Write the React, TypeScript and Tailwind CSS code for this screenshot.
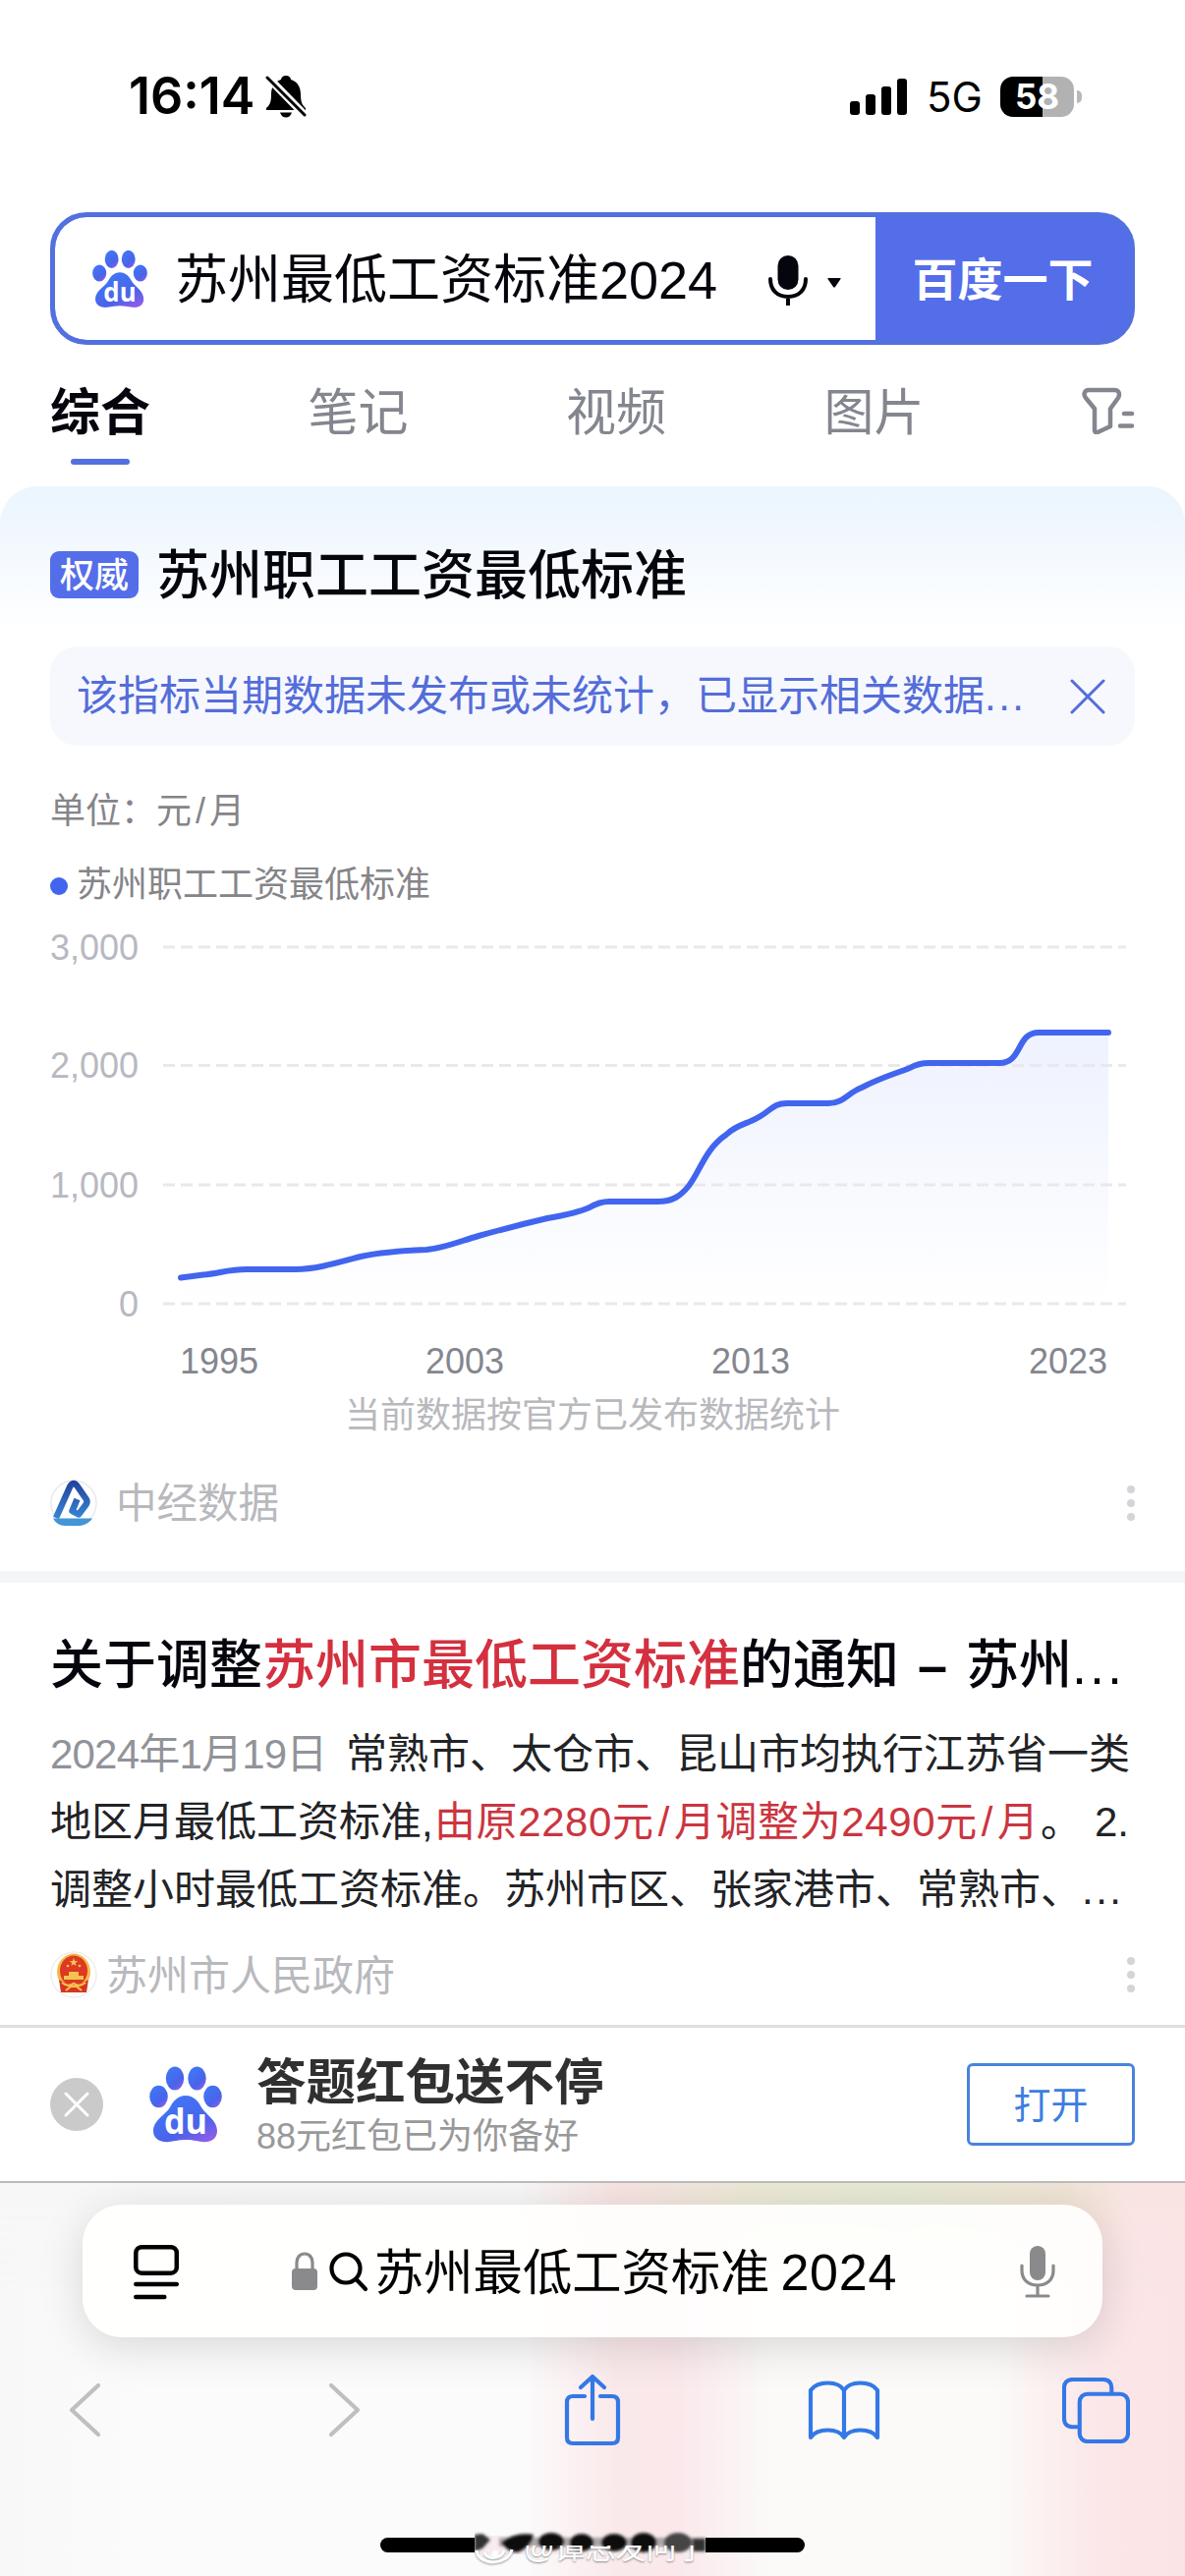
import { useId } from 'react'

const tabs = ['综合', '笔记', '视频', '图片']

const yAxis = [
  { label: '3,000', y: 14 },
  { label: '2,000', y: 134.5 },
  { label: '1,000', y: 256 },
  { label: '0', y: 377 },
]

const LINE =
  'M133 350.5 L156 347.5 C172 346 182 342 200 342 L250 342 C270 342 290 336 316 329 C338 324 359 323 383 322 C403 320 418 313 436 308 Q472 298 506 290 C524 287 540 283 549 279 Q559 273 569 273 L618 273 C634 273 642 267 650 257 C661 243 667 219 688 205 C699 194 711 194 723 186 C735 179 736 173 750 173 L792 173 C808 173 812 162 826 157 C847 146 860 143 875 137 Q884 132 894 132 L966 132 C990 132 983 101 1006 101 L1077 101'

function Paw({ className }: { className: string }) {
  const id = useId()
  return (
    <svg viewBox="0 0 74 78" className={className}>
      <defs>
        <linearGradient id={id} x1="0.2" y1="0" x2="0.9" y2="1">
          <stop offset="0" stopColor="#3f79f6" />
          <stop offset="0.65" stopColor="#4a63ea" />
          <stop offset="1" stopColor="#965ce8" />
        </linearGradient>
      </defs>
      <g fill={`url(#${id})`}>
        <ellipse cx="9.5" cy="31" rx="9.3" ry="11.3" />
        <ellipse cx="26" cy="12.500" rx="9.2" ry="12" />
        <ellipse cx="48.500" cy="12.500" rx="9.2" ry="12" />
        <ellipse cx="64.500" cy="31" rx="9.3" ry="11.3" />
        <path d="M37 30c8 0 13 6 16 12 5 8 16 13 16 24 0 9-8 12-15 11-7-1-11-2-17-2s-10 1-17 2C13 78 4 75 4 66c0-11 12-16 17-24 3-6 8-12 16-12z" />
      </g>
      <text
        x="37"
        y="69"
        textAnchor="middle"
        fontSize="36"
        fontWeight="700"
        fill="#fff"
        textLength="44"
        lengthAdjust="spacingAndGlyphs"
        className="font-['Open_Sans',sans-serif]"
      >
        du
      </text>
    </svg>
  )
}

function StatusBar() {
  return (
    <div className="flex h-[216px] items-start justify-between pl-[131px] pr-[105px] pt-[70px] font-['Inter',sans-serif]">
      <div className="flex h-14 items-center gap-[11px]">
        <span className="w-[128px] whitespace-nowrap text-[52px] font-semibold leading-none">16:14</span>
        <svg viewBox="0 0 42 44" className="h-[44px] w-[42px]">
          <path d="M21 1c3 0 5 2 5 4 7 2 10 8 10 15 0 9 2 11 5 14v2H1v-2c4-3 5-7 5-14C6 13 9 7 16 5c0-2 2-4 5-4z" />
          <path d="M15 38.500h12c-1 3-3 5-6 5s-5-2-6-5z" />
          <path d="M1 1l40 41" stroke="#fff" strokeWidth="8" />
          <path d="M2 3l38 38" stroke="#000" strokeWidth="3" strokeLinecap="round" />
        </svg>
      </div>
      <div className="flex h-14 items-center">
        <div className="flex items-end gap-[6px]">
          <i className="h-[14px] w-[10px] rounded-[3px] bg-black" />
          <i className="h-[21px] w-[10px] rounded-[3px] bg-black" />
          <i className="h-[29px] w-[10px] rounded-[3px] bg-black" />
          <i className="h-[37px] w-[10px] rounded-[3px] bg-black" />
        </div>
        <span className="ml-[20px] w-[73px] whitespace-nowrap pt-[2px] text-[42px] leading-none">5G</span>
        <div className="ml-[2px] flex h-[41px] w-[75px] items-center justify-center rounded-[13px] bg-[linear-gradient(90deg,#000_57%,#b2b2b2_57%)] text-[35px] font-bold leading-none text-white">
          58
        </div>
        <i className="ml-[3px] h-[13px] w-[5px] rounded-r-full bg-[#b8b8b8]" />
      </div>
    </div>
  )
}

function SearchBox() {
  return (
    <div className="mx-[51px] flex h-[135px] overflow-hidden rounded-[37px] border-[5px] border-[#5370e0] bg-[#546de9]">
      <div className="flex flex-1 items-center rounded-l-[32px] bg-white pl-[38px]">
        <Paw className="h-[60px] w-[56px]" />
        <span className="ml-[28px] w-[553px] whitespace-nowrap pt-[2px] text-[54px] leading-[60px] text-[#05060d]">苏州最低工资标准2024</span>
        <svg viewBox="0 0 40 52" className="ml-[51px] mt-[2px] h-[52px] w-[40px]" fill="none" stroke="#05060d" strokeWidth="4">
          <rect x="9.500" y="1" width="21" height="35" rx="10.500" fill="#05060d" stroke="none" />
          <path d="M2 25c0 11 7 18 18 18s18-7 18-18M20 43v8" strokeLinecap="round" />
        </svg>
        <svg viewBox="0 0 14 10" className="ml-5 mt-2 h-[10px] w-[14px]">
          <path d="M1 0h12q1 0 .5 1L8 9q-1 1-2 0L.5 1Q0 0 1 0z" fill="#05060d" />
        </svg>
      </div>
      <div className="flex w-[259px] items-center justify-center pt-[4px] text-[46px] font-bold text-white">百度一下</div>
    </div>
  )
}

function Tabs() {
  return (
    <div className="flex h-[144px] items-start justify-between px-[51px] pt-[39px]">
      {tabs.map((t, i) => (
        <div key={t} className="flex w-[102px] flex-col items-center">
          <span className={i === 0 ? 'text-[51px] font-bold leading-[62px] text-[#05060d]' : 'text-[51px] leading-[62px] text-[#84868f]'}>{t}</span>
          {i === 0 && <i className="mt-[15px] h-[6px] w-[60px] rounded-full bg-[#5370e0]" />}
        </div>
      ))}
      <svg viewBox="0 0 54 48" className="mt-[4px] h-[48px] w-[54px]" fill="none" stroke="#84868f" strokeWidth="4.500" strokeLinecap="round" strokeLinejoin="round">
        <path d="M7 3h26c5 0 6 4 4 8l-8 11v18l-13 6q-3 1-3-2V22L4 11C1 7 3 3 7 3z" />
        <path d="M43 27h8M39 39.500h12" />
      </svg>
    </div>
  )
}

function Chart() {
  return (
    <svg viewBox="0 0 1104 462" className="h-[462px] w-[1104px] overflow-visible">
      <defs>
        <linearGradient id="area" x1="0" y1="101" x2="0" y2="378" gradientUnits="userSpaceOnUse">
          <stop offset="0" stopColor="#eef2fe" />
          <stop offset="1" stopColor="#ffffff" />
        </linearGradient>
      </defs>
      <path d={`${LINE} V377 H133 Z`} fill="url(#area)" />
      {yAxis.map((t) => (
        <g key={t.label}>
          <path d={`M115 ${t.y}H1095`} stroke="#e9e9ec" strokeWidth="3" strokeDasharray="12 6" />
          <text x="90" y={t.y + 12.5} textAnchor="end" fontSize="36" fill="#b7b9c1" className="font-['Liberation_Sans']">
            {t.label}
          </text>
        </g>
      ))}
      <path d={LINE} fill="none" stroke="#4165ee" strokeWidth="6" strokeLinecap="round" />
      <g fontSize="36" fill="#84868f" textAnchor="middle" className="font-['Liberation_Sans']">
        <text x="172" y="448">1995</text>
        <text x="422" y="448">2003</text>
        <text x="713" y="448">2013</text>
        <text x="1036" y="448">2023</text>
      </g>
    </svg>
  )
}

function More() {
  return (
    <div className="ml-auto flex flex-col gap-[6px]">
      <i className="size-[8px] rounded-full bg-[#d4d5d9]" />
      <i className="size-[8px] rounded-full bg-[#d4d5d9]" />
      <i className="size-[8px] rounded-full bg-[#d4d5d9]" />
    </div>
  )
}

function StatCard() {
  return (
    <section className="h-[1104px] rounded-t-[38px] bg-[linear-gradient(180deg,#ebf6fe_0,#f0f7fe_40px,#fff_145px)] px-[51px] pt-[58px]">
      <div className="flex h-[64px] items-center">
        <span className="flex h-[48px] w-[90px] items-center justify-center rounded-[9px] bg-[#546de9] pt-[2px] text-[35px] font-medium text-white">权威</span>
        <h2 className="ml-[18px] pt-[1px] text-[54px] font-medium leading-[64px] text-[#05060d]">苏州职工工资最低标准</h2>
      </div>

      <div className="mt-[41px] flex h-[101px] items-center justify-between rounded-[27px] bg-[#f6f8fe] pl-[27px] pr-[30px]">
        <span className="text-[42px] text-[#546dd9]">
          该指标当期数据未发布或未统计，已显示相关数据<span className="tracking-[2.500px]">...</span>
        </span>
        <svg viewBox="0 0 36 36" className="size-9" stroke="#546dd9" strokeWidth="3" strokeLinecap="round">
          <path d="M2 2l32 32M34 2L2 34" />
        </svg>
      </div>

      <p className="mt-[42px] text-[36px] leading-[50px] text-[#858589]">
        单位：元<span className="mx-[4px]">/</span>月
      </p>
      <p className="mt-[25px] flex items-center text-[36px] leading-[50px] text-[#858589]">
        <i className="mr-[9px] mt-[2px] size-[18px] rounded-full bg-[#4165ee]" />
        苏州职工工资最低标准
      </p>

      <div className="mt-[24px]">
        <Chart />
      </div>
      <p className="mt-[4px] text-center text-[36px] leading-[50px] text-[#b8b9bd]">当前数据按官方已发布数据统计</p>

      <div className="mt-[37px] flex h-[54px] items-center">
        <svg viewBox="0 0 48 48" className="size-12">
          <defs>
            <linearGradient id="zj" x1="0" y1="0" x2="0" y2="48" gradientUnits="userSpaceOnUse">
              <stop offset="0" stopColor="#213f9b" />
              <stop offset="1" stopColor="#3b95df" />
            </linearGradient>
          </defs>
          <circle cx="24" cy="24" r="23" fill="#fff" stroke="#e8eaed" strokeWidth="1.500" />
          <path
            d="M6 39L20.500 6.500q3.500-5 7 0l9 13q2 3 0 6L29 35.500l-6.500-3.500 5-12"
            fill="none"
            stroke="url(#zj)"
            strokeWidth="6.500"
            strokeLinejoin="round"
          />
          <path d="M3 39.500h40c-4 5.500-9 7.500-14 7.500H15C10 47 5 44 3 39.500z" fill="#4395d8" />
        </svg>
        <span className="ml-[19px] pt-[2px] text-[41.500px] text-[#b8b9bd]">中经数据</span>
        <More />
      </div>
    </section>
  )
}

function Result() {
  return (
    <section className="h-[450px] whitespace-nowrap px-[51px] pt-[50px]">
      <h2 className="text-[54px] font-medium leading-[68px] text-[#05060d]">
        关于调整<em className="not-italic text-[#d4303f]">苏州市最低工资标准</em>的通知<span className="ml-[19px] mr-[19px] font-bold">–</span>苏州
        <span className="tracking-[3px]">...</span>
      </h2>
      <div className="mt-[22px] text-[42px] leading-[69px] text-[#222326]">
        <p className="flex">
          <span className="w-[301px] tracking-[-0.8px] text-[#91939a]">2024年1月19日</span>常熟市、太仓市、昆山市均执行江苏省一类
        </p>
        <p className="flex">
          <span className="w-[391px]">地区月最低工资标准,</span>
          <em className="w-[617px] not-italic tracking-[0.600px] text-[#cb3540]">
            由原2280元<span className="mx-[4px]">/</span>月调整为2490元<span className="mx-[4px]">/</span>月
          </em>
          。
          <span className="ml-auto mr-[6px]">2.</span>
        </p>
        <p>
          调整小时最低工资标准。苏州市区、张家港市、常熟市、<span className="tracking-[2.500px]">...</span>
        </p>
      </div>
      <div className="mt-[25px] flex h-[54px] items-center text-[42px] text-[#b8b9bd]">
        <svg viewBox="0 0 48 48" className="size-12">
          <circle cx="24" cy="24" r="23" fill="#fff" stroke="#eeeeee" strokeWidth="1.500" />
          <ellipse cx="24" cy="21" rx="17" ry="18.500" fill="#f4b94c" />
          <ellipse cx="24" cy="20" rx="14" ry="15.500" fill="#dc3a22" />
          <path d="M24 7l1.200 3h3l-2.400 2 .8 3-2.600-1.800-2.600 1.800 .8-3-2.400-2h3z" fill="#f6c350" />
          <circle cx="18" cy="15" r="1.300" fill="#f6c350" />
          <circle cx="30" cy="15" r="1.300" fill="#f6c350" />
          <path d="M19 21h10v4h5v4H14v-4h5z" fill="#f6c350" />
          <path d="M9 29c8 6 22 6 30 0l-2 13H11z" fill="#d5361f" />
          <path d="M12 32q6 5 12 1 6 4 12-1M16 40l5-4h6l5 4" fill="none" stroke="#f6c350" strokeWidth="2.200" />
        </svg>
        <span className="ml-[9px] pt-[2px]">苏州市人民政府</span>
        <More />
      </div>
    </section>
  )
}

function AppBanner() {
  return (
    <section className="flex h-[159px] items-center border-t-[3px] border-[#dfdfe0] bg-white px-[51px]">
      <svg viewBox="0 0 54 54" className="size-[54px]">
        <circle cx="27" cy="27" r="27" fill="#cacaca" />
        <path d="M16 16l22 22M38 16L16 38" stroke="#fff" strokeWidth="3" strokeLinecap="round" />
      </svg>
      <Paw className="ml-[47px] h-[78px] w-[74px]" />
      <div className="ml-[35px] pt-[5px]">
        <p className="text-[50.500px] font-bold leading-[60px] text-[#303030]">答题红包送不停</p>
        <p className="text-[36px] leading-[50px] text-[#999]">88元红包已为你备好</p>
      </div>
      <div className="ml-auto flex h-[84px] w-[171px] items-center justify-center rounded-[6px] border-[3px] border-[#4b83dc] pt-[2px] text-[38px] text-[#3d7de0]">打开</div>
    </section>
  )
}

function BrowserBar() {
  return (
    <footer className="relative h-[402px] border-t-2 border-[#bcbcbc] bg-[linear-gradient(90deg,#f8f8f8_0,#fbfbfb_12%,#fcfbfb_44%,#fae9eb_52%,#fae8eb_57%,#fbfaf8_65%,#fbfaf8_84%,#fbe6e8_93%,#fbe4e6_100%)]">
      <div className="absolute inset-x-0 top-0 h-[110px] bg-[linear-gradient(90deg,#f7f7f7_0,#f6f6f6_44%,#f7e3e2_52%,#ebe8d5_63%,#e6e9d3_76%,#efe3d5_90%,#fae4e3_96%)] [mask-image:linear-gradient(#000_20%,transparent)]" />
      <div className="relative mx-[84px] mt-[22px] flex h-[135px] items-center rounded-[40px] bg-[#fffffe]/90 pl-[52px] pr-[48px] shadow-[0_10px_45px_rgba(0,0,0,0.14)]">
        <svg viewBox="0 0 46 56" className="mt-[2px] h-[56px] w-[46px]" fill="none" stroke="#000" strokeWidth="4.500" strokeLinecap="round">
          <rect x="2.300" y="2.200" width="41.500" height="26.500" rx="6" />
          <path d="M2.300 40h41.500M2.300 53h29" />
        </svg>
        <svg viewBox="0 0 28 40" className="ml-[114px] h-[40px] w-[28px]">
          <rect x="1" y="17" width="26" height="22" rx="4" fill="#8a8a8d" />
          <path d="M6 18v-7c0-5 3-9 8-9s8 4 8 9v7" fill="none" stroke="#8a8a8d" strokeWidth="3.200" />
        </svg>
        <svg viewBox="0 0 40 42" className="ml-[11px] mt-[2px] h-[42px] w-[40px]" fill="none" stroke="#000" strokeWidth="4.200" strokeLinecap="round">
          <circle cx="17" cy="17" r="14.500" />
          <path d="M27.500 28l9.500 10" />
        </svg>
        <span className="ml-[6px] whitespace-nowrap pt-[2px] text-[50.300px] text-black">
          苏州最低工资标准<span className="ml-[11px] text-[52px] tracking-[0.8px]">2024</span>
        </span>
        <svg viewBox="0 0 36 54" className="ml-auto h-[54px] w-[36px]" fill="none" stroke="#8a8a8d" strokeWidth="3.200" strokeLinecap="round">
          <rect x="10" y="1" width="16" height="35" rx="8" fill="#8a8a8d" stroke="none" />
          <path d="M2 21v5c0 9 6 15 16 15s16-6 16-15v-5M18 41v10M7 52h22" />
        </svg>
      </div>

      <nav className="relative mt-[35px] flex h-[78px] items-center pl-[69px]">
        <svg viewBox="0 0 34 56" className="h-[56px] w-[34px]" fill="none" stroke="#bfbfc1" strokeWidth="4.200" strokeLinecap="round" strokeLinejoin="round">
          <path d="M31 3L4 28l27 25" />
        </svg>
        <svg viewBox="0 0 34 56" className="ml-[231px] h-[56px] w-[34px]" fill="none" stroke="#bfbfc1" strokeWidth="4.200" strokeLinecap="round" strokeLinejoin="round">
          <path d="M3 3l27 25L3 53" />
        </svg>
        <svg viewBox="0 0 58 74" className="ml-[206px] h-[74px] w-[58px]" fill="none" stroke="#3478e6" strokeWidth="4.200" strokeLinecap="round" strokeLinejoin="round">
          <path d="M21 23H9c-4 0-6 2-6 6v36c0 4 2 6 6 6h40c4 0 6-2 6-6V29c0-4-2-6-6-6H37M29 46V3M17 14L29 3l12 11" />
        </svg>
        <svg viewBox="0 0 74 62" className="ml-[190px] h-[62px] w-[74px]" fill="none" stroke="#3478e6" strokeWidth="4.200" strokeLinejoin="round">
          <path d="M37 11C31 1 10 1 3 11v48c7-10 28-10 34 0 6-10 27-10 34 0V11C64 1 43 1 37 11zM37 11v48" />
        </svg>
        <svg viewBox="0 0 70 68" className="ml-[185px] h-[67px] w-[69px]" fill="none" stroke="#3478e6" strokeWidth="4.200">
          <path d="M18 51h-7c-6 0-9-3-9-9V11c0-6 3-9 9-9h31c6 0 9 3 9 9v6" />
          <rect x="18" y="17" width="50" height="49" rx="8" />
        </svg>
      </nav>

      <HomeIndicator />
    </footer>
  )
}

function HomeIndicator() {
  return (
    <div className="absolute bottom-0 left-[387px] h-[50px] w-[432px]">
      <i className="absolute left-0 top-[11px] h-[15px] w-full rounded-full bg-black" />
      <svg viewBox="0 0 236 50" className="absolute left-[96px] top-0 h-[50px] w-[236px]">
        <defs>
          <filter id="soft" x="-10%" y="-40%" width="120%" height="180%">
            <feGaussianBlur stdDeviation="1.800" />
          </filter>
        </defs>
        <rect y="9" width="235" height="19" fill="#f8ecee" />
        <g fill="#0a0a0a" filter="url(#soft)">
          <path d="M25 11h210v9H25z" fill="#777" opacity="0.6" />
          <path d="M0 8l8-1 8 6-8 9-8 3z" fill="#333" />
          <path d="M27 16q14-11 33-8-2 12-16 18-10 0-17-10z" />
          <ellipse cx="78" cy="15" rx="13" ry="9" />
          <ellipse cx="109" cy="16" rx="12" ry="9" />
          <ellipse cx="142" cy="16" rx="13" ry="9" />
          <ellipse cx="172" cy="16" rx="13" ry="10" />
          <ellipse cx="207" cy="16" rx="14" ry="10" fill="#444" />
          <path d="M222 12h13v13h-13z" fill="#333" />
        </g>
        <g fill="none" stroke="#fff" strokeWidth="3" className="drop-shadow-[0_1px_1px_#999]">
          <path d="M2 24c2 16 32 16 36-1M10 26c3 8 17 7 20-2" />
        </g>
        <circle cx="21" cy="27" r="3" fill="#fff" />
      </svg>
      <span className="absolute left-[146px] top-[2px] whitespace-nowrap text-[31px] leading-[40px] text-white [clip-path:inset(17px_0_0_0)] [text-shadow:0_1px_2px_#888]">@谭总发问了</span>
    </div>
  )
}

export default function App() {
  return (
    <main className="h-[2622px] w-[1206px] overflow-hidden bg-white font-['Liberation_Sans','Noto_Sans_CJK_SC',sans-serif]" lang="zh-CN">
      <StatusBar />
      <SearchBox />
      <Tabs />
      <StatCard />
      <div className="h-3 bg-[#f4f5f9]" />
      <Result />
      <AppBanner />
      <BrowserBar />
    </main>
  )
}
